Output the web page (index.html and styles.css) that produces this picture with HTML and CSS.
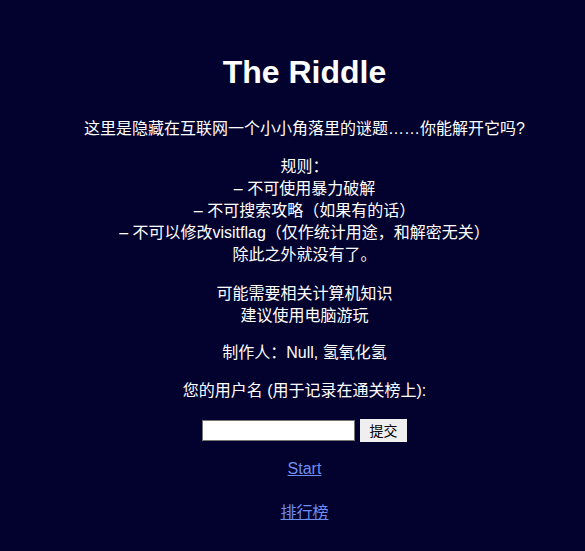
FILE: index.html
```html
<!DOCTYPE html>
<html lang="zh">
<head>
<meta charset="utf-8">
<title>The Riddle</title>
<link rel="stylesheet" href="styles.css">
</head>
<body>
<main class="page">
  <h1 class="title">The Riddle</h1>
  <p class="para intro">这里是隐藏在互联网一个小小角落里的谜题……你能解开它吗?</p>
  <p class="para rules">规则：<br>– 不可使用暴力破解<br>– 不可搜索攻略（如果有的话）<br>– 不可以修改visitflag（仅作统计用途，和解密无关）<br>除此之外就没有了。</p>
  <p class="para tips">可能需要相关计算机知识<br>建议使用电脑游玩</p>
  <p class="para">制作人：Null, 氢氧化氢</p>
  <p class="para">您的用户名 (用于记录在通关榜上):</p>
  <form class="form">
    <input class="name-input" type="text">
    <button class="submit" type="button">提交</button>
  </form>
  <p class="para start"><a class="link" href="#">Start</a></p>
  <p class="para rank"><a class="link" href="#">排行榜</a></p>
</main>
</body>
</html>
```
FILE: styles.css
```css
html, body {
  margin: 0;
  padding: 0;
  background: #03022e;
}
body {
  height: 551px;
  overflow: hidden;
}
.page {
  display: flex;
  flex-direction: column;
  align-items: center;
  padding: 54px 0 0 24px;
  color: #ffffff;
  font-family: "Liberation Sans", "Noto Sans CJK SC", sans-serif;
  font-size: 16px;
  line-height: 22px;
  text-align: center;
}
.title {
  margin: 0 0 28px;
  font-size: 32px;
  line-height: 36px;
  font-weight: bold;
}
.para {
  margin: 0 0 15px;
}
.intro {
  margin-bottom: 16px;
}
.rules {
  margin-bottom: 17px;
}
.tips + .para {
  margin-bottom: 16px;
}
.form {
  display: flex;
  align-items: center;
  gap: 5px;
  margin: 2px 0 16px;
}
.name-input {
  box-sizing: border-box;
  width: 153px;
  height: 21px;
  margin: 0;
  padding: 0 3px;
  border: 1px solid #767676;
  background: #ffffff;
}
.submit {
  box-sizing: border-box;
  width: 47px;
  height: 23px;
  margin: 0;
  padding: 0;
  border: none;
  background: #efefef;
  color: #000000;
  font-family: "Noto Sans CJK SC", sans-serif;
  font-size: 14px;
  line-height: 23px;
}
.start {
  margin-bottom: 22px;
}
.link {
  color: #6f8ff0;
  text-decoration: underline;
}
```
